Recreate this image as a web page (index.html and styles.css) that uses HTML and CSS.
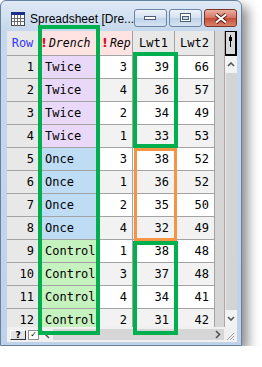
FILE: index.html
```html
<!DOCTYPE html>
<html lang="en">
<head>
    <meta charset="UTF-8">
    <title>Spreadsheet [Drench]</title>
    <link rel="stylesheet" href="styles.css">
</head>
<body>
<div class="window">
    <!-- title bar -->
    <div class="titlebar">
        <svg class="app-icon" width="14" height="14" viewBox="0 0 14 14">
            <rect x="0.5" y="0.5" width="13" height="13" fill="#fff" stroke="#4a4a4a"/>
            <rect x="0" y="0" width="14" height="3" fill="#1b2f86"/>
            <path d="M0.5 6.5H13.5M0.5 9.5H13.5M3.5 3V14M6.5 3V14M9.5 3V14" stroke="#6b6b6b"/>
        </svg>
        <span class="title">Spreadsheet [Dre...</span>
        <div class="caption">
            <div class="cbtn">
                <svg width="13" height="6" viewBox="0 0 13 6"><rect x="0.5" y="1.5" width="11" height="3" fill="#fff" stroke="#4d5f76"/></svg>
            </div>
            <div class="cbtn">
                <svg width="12" height="10" viewBox="0 0 12 10"><rect x="0.5" y="0.5" width="10" height="8" fill="#fff" stroke="#4d5f76"/><rect x="2.5" y="3.5" width="6" height="3" fill="#c9d9ec" stroke="#4d5f76"/></svg>
            </div>
            <div class="cbtn close">
                <svg width="14" height="11" viewBox="0 0 14 11"><path d="M2 1.5L12 9.5M12 1.5L2 9.5" stroke="#5b2219" stroke-width="4"/><path d="M2 1.5L12 9.5M12 1.5L2 9.5" stroke="#fff" stroke-width="2"/></svg>
            </div>
        </div>
    </div>

    <!-- client area -->
    <div class="client">
        <div class="main">
            <div class="sheet">
                <div class="row head">
                    <div class="cell rowhd">Row</div>
                    <div class="cell pink"><span class="bang">!</span><i class="var">Drench</i></div>
                    <div class="cell pink"><span class="bang">!</span><i class="var">Rep</i></div>
                    <div class="cell mid">Lwt1</div>
                    <div class="cell mid">Lwt2</div>
                </div>
                <div class="body">
                    <div class="row"><div class="cell n">1</div><div class="cell twice">Twice</div><div class="cell v">3</div><div class="cell v">39</div><div class="cell v">66</div></div>
                    <div class="row"><div class="cell n">2</div><div class="cell twice">Twice</div><div class="cell v">4</div><div class="cell v">36</div><div class="cell v">57</div></div>
                    <div class="row"><div class="cell n">3</div><div class="cell twice">Twice</div><div class="cell v">2</div><div class="cell v">34</div><div class="cell v">49</div></div>
                    <div class="row"><div class="cell n">4</div><div class="cell twice">Twice</div><div class="cell v">1</div><div class="cell v">33</div><div class="cell v">53</div></div>
                    <div class="row"><div class="cell n">5</div><div class="cell once">Once</div><div class="cell v">3</div><div class="cell v">38</div><div class="cell v">52</div></div>
                    <div class="row"><div class="cell n">6</div><div class="cell once">Once</div><div class="cell v">1</div><div class="cell v">36</div><div class="cell v">52</div></div>
                    <div class="row"><div class="cell n">7</div><div class="cell once">Once</div><div class="cell v">2</div><div class="cell v">35</div><div class="cell v">50</div></div>
                    <div class="row"><div class="cell n">8</div><div class="cell once">Once</div><div class="cell v">4</div><div class="cell v">32</div><div class="cell v">49</div></div>
                    <div class="row"><div class="cell n">9</div><div class="cell control">Control</div><div class="cell v">1</div><div class="cell v">38</div><div class="cell v">48</div></div>
                    <div class="row"><div class="cell n">10</div><div class="cell control">Control</div><div class="cell v">3</div><div class="cell v">37</div><div class="cell v">48</div></div>
                    <div class="row"><div class="cell n">11</div><div class="cell control">Control</div><div class="cell v">4</div><div class="cell v">34</div><div class="cell v">41</div></div>
                    <div class="row"><div class="cell n">12</div><div class="cell control">Control</div><div class="cell v">2</div><div class="cell v">31</div><div class="cell v">42</div></div>
                </div>
            </div>
            <div class="filler"></div>
            <div class="vscroll">
                <div class="vs-corner">
                    <svg width="5" height="12" viewBox="0 0 5 12"><rect x="2" y="0" width="1" height="12" fill="#000"/><rect x="1" y="2" width="3" height="4" fill="#000"/></svg>
                </div>
                <div class="vs-btn">
                    <svg width="8" height="5" viewBox="0 0 8 5"><path d="M1 4L4 1L7 4" fill="none" stroke="#555" stroke-width="1.6"/></svg>
                </div>
                <div class="vs-track"></div>
                <div class="vs-btn">
                    <svg width="8" height="5" viewBox="0 0 8 5"><path d="M1 1L4 4L7 1" fill="none" stroke="#555" stroke-width="1.6"/></svg>
                </div>
            </div>
        </div>
        <div class="bottombar">
            <div class="qbtn">?</div>
            <div class="chk">✓</div>
            <svg class="tool" width="9" height="9" viewBox="0 0 9 9"><path d="M1 1L8 8" stroke="#555" stroke-width="1.5"/></svg>
            <div class="hscroll">
                <svg width="6" height="9" viewBox="0 0 6 9"><path d="M1 1L4.5 4.5L1 8" fill="none" stroke="#555" stroke-width="1.6"/></svg>
            </div>
            <svg class="grip" width="10" height="10" viewBox="0 0 10 10"><path d="M9 2L2 9M9 5L5 9M9 8L8 9" stroke="#a0a0a0"/></svg>
        </div>
    </div>

    <!-- annotation boxes drawn over the grid -->
    <div class="mark green mark-drench"></div>
    <div class="mark green mark-twice"></div>
    <div class="mark orange mark-once"></div>
    <div class="mark green mark-control"></div>
</div>
</body>
</html>
```

FILE: styles.css
```css
body {
    margin: 0;
    background: #fff;
}
.window {
    position: relative;
    width: 242px;
    height: 346px;
    box-sizing: border-box;
    border: 1px solid #66809e;
    border-radius: 6px 6px 0 0;
    background: linear-gradient(#dfe9f5, #c6d8ed 30px, #bed2e9);
    box-shadow: 6px 6px 12px rgba(0, 0, 0, 0.45);
    display: flex;
    flex-direction: column;
}
.titlebar {
    height: 30px;
    display: flex;
    align-items: flex-start;
}
.app-icon {
    flex: none;
    margin: 11px 0 0 10px;
}
.title {
    margin: 11px 0 0 5px;
    font-family: "Liberation Sans", Arial, sans-serif;
    font-size: 12px;
    line-height: 15px;
    color: #000;
    white-space: nowrap;
}
.caption {
    margin: 8px 5px 0 auto;
    display: flex;
    gap: 2px;
}
.cbtn {
    width: 31px;
    height: 16px;
    border: 1px solid #6b84a3;
    border-radius: 3px;
    background: linear-gradient(#edf3fa, #d3e1f1 50%, #bed1e8 50%, #d6e4f3);
    display: flex;
    align-items: center;
    justify-content: center;
}
.cbtn.close {
    border-color: #7a3427;
    background: linear-gradient(#eab0a2, #d4735f 50%, #c24b34 50%, #d9836a);
}
.client {
    margin: 0 4px 3px 6px;
    height: 311px;
    display: flex;
    flex-direction: column;
    background: #f0f0f0;
}
.main {
    height: 296px;
    display: flex;
    overflow: hidden;
}
.sheet {
    width: 208px;
    font-family: "DejaVu Sans Mono", monospace;
    font-size: 12px;
    color: #000;
}
.row {
    display: grid;
    grid-template-columns: 32px 61px 33px 42px 40px;
    height: 23px;
}
.row.head {
    height: 25px;
}
.cell {
    box-sizing: border-box;
    border-right: 1px solid #a3a3a3;
    border-bottom: 1px solid #a3a3a3;
    line-height: 22px;
    white-space: nowrap;
    overflow: hidden;
    background: #fff;
}
.head .cell {
    line-height: 24px;
    background: #e8e8e8;
}
.head .rowhd {
    text-align: center;
    color: #3535ff;
}
.head .pink {
    background: #ffe3e3;
    padding-left: 2px;
}
.head .mid {
    text-align: center;
}
.bang {
    font-family: "DejaVu Sans", sans-serif;
    font-weight: bold;
    font-size: 13px;
    color: #e0102a;
    margin-right: 2px;
}
.var {
    color: #000;
    font-size: 11.5px;
}
.n {
    background: #e8e8e8;
    text-align: right;
    padding-right: 4px;
}
.twice, .once, .control {
    padding-left: 6px;
}
.twice {
    background: #e9d8f7;
}
.once {
    background: #bfdcf5;
}
.control {
    background: #c6f2bf;
}
.v {
    text-align: right;
    padding-right: 5px;
}
.body .row:nth-child(even) .v {
    background: #f2f2f2;
}
.filler {
    width: 10px;
    background: #d6d6d6;
    border-right: 1px solid #a8a8a8;
    box-sizing: border-box;
}
.vscroll {
    width: 12px;
    display: flex;
    flex-direction: column;
    background: #e8e8e8;
}
.vs-corner {
    height: 25px;
    box-sizing: border-box;
    border: 1px solid #000;
    border-width: 1px 2px 2px 1px;
    background: #d8d8d8;
    display: flex;
    justify-content: center;
    padding-top: 3px;
}
.vs-btn {
    height: 17px;
    display: flex;
    align-items: center;
    justify-content: center;
    background: #f2f2f2;
}
.vs-track {
    flex: 1;
    background: #d4d4d4;
    border-left: 1px solid #e8e8e8;
}
.bottombar {
    height: 15px;
    display: flex;
    align-items: center;
    padding-left: 3px;
    background: #f0f0f0;
}
.qbtn {
    width: 16px;
    height: 10px;
    box-sizing: border-box;
    border: 1px solid;
    border-color: #fff #303030 #303030 #fff;
    background: #e4e4e4;
    font-family: "DejaVu Sans", sans-serif;
    font-weight: bold;
    font-size: 9px;
    line-height: 8px;
    text-align: center;
}
.chk {
    width: 11px;
    height: 10px;
    margin-left: 2px;
    box-sizing: border-box;
    border: 1px solid #909090;
    background: #fff;
    font-family: "DejaVu Sans", sans-serif;
    font-size: 8px;
    line-height: 8px;
    text-align: center;
}
.tool {
    margin-left: 2px;
}
.hscroll {
    flex: 1;
    height: 11px;
    margin-left: 3px;
    background: #d6d6d6;
    display: flex;
    align-items: center;
    justify-content: flex-end;
    padding-right: 3px;
}
.grip {
    margin: 3px 2px 0 1px;
}
.mark {
    position: absolute;
    box-sizing: border-box;
}
.green {
    border: 4px solid #00b04f;
}
.orange {
    border: 3px solid #f59445;
}
.mark-drench {
    left: 37px;
    top: 24px;
    width: 62px;
    height: 310px;
}
.mark-twice {
    left: 132px;
    top: 51px;
    width: 45px;
    height: 96px;
}
.mark-once {
    left: 133px;
    top: 147px;
    width: 43px;
    height: 93px;
}
.mark-control {
    left: 132px;
    top: 240px;
    width: 45px;
    height: 94px;
}
```
